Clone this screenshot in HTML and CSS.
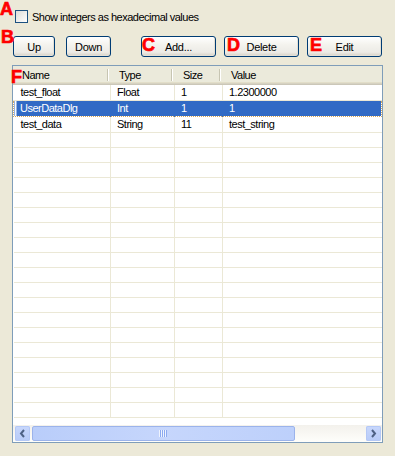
FILE: index.html
```html
<html>
	<head>
		<title>User Data</title>
		<link rel="stylesheet" href="styles.css">
	</head>
	<body>
		<div class="mark" id="markA">A</div>
		<div class="mark" id="markB">B</div>
		<div class="mark" id="markC">C</div>
		<div class="mark" id="markD">D</div>
		<div class="mark" id="markE">E</div>
		<div class="mark" id="markF">F</div>

		<label class="opts">
			<span class="check"></span>
			<span>Show integers as hexadecimal values</span>
		</label>

		<div class="buttons">
			<button class="btn btnUp">Up</button>
			<button class="btn btnDown">Down</button>
			<button class="btn wide btnAdd">Add...</button>
			<button class="btn wide">Delete</button>
			<button class="btn wide">Edit</button>
		</div>

		<div class="list">
			<div class="head">
				<div class="hcell c1">Name</div>
				<div class="hcell c2">Type</div>
				<div class="hcell c3">Size</div>
				<div class="hcell c4">Value</div>
			</div>
			<div class="rows">
				<table>
					<tr><td>test_float</td><td>Float</td><td>1</td><td>1.2300000</td></tr>
					<tr class="sel"><td>UserDataDlg</td><td>Int</td><td>1</td><td>1</td></tr>
					<tr><td>test_data</td><td>String</td><td>11</td><td>test_string</td></tr>
					<tr><td></td><td></td><td></td><td></td></tr>
					<tr><td></td><td></td><td></td><td></td></tr>
					<tr><td></td><td></td><td></td><td></td></tr>
					<tr><td></td><td></td><td></td><td></td></tr>
					<tr><td></td><td></td><td></td><td></td></tr>
					<tr><td></td><td></td><td></td><td></td></tr>
					<tr><td></td><td></td><td></td><td></td></tr>
					<tr><td></td><td></td><td></td><td></td></tr>
					<tr><td></td><td></td><td></td><td></td></tr>
					<tr><td></td><td></td><td></td><td></td></tr>
					<tr><td></td><td></td><td></td><td></td></tr>
					<tr><td></td><td></td><td></td><td></td></tr>
					<tr><td></td><td></td><td></td><td></td></tr>
					<tr><td></td><td></td><td></td><td></td></tr>
					<tr><td></td><td></td><td></td><td></td></tr>
					<tr><td></td><td></td><td></td><td></td></tr>
					<tr><td></td><td></td><td></td><td></td></tr>
					<tr><td></td><td></td><td></td><td></td></tr>
					<tr><td></td><td></td><td></td><td></td></tr>
				</table>
			</div>
			<div class="hscroll">
				<div class="arrow">
					<svg width="15" height="15" viewBox="0 0 15 15"><path d="M9 4 L6 7.5 L9 11" fill="none" stroke="#4d6185" stroke-width="2"/></svg>
				</div>
				<div class="track">
					<div class="thumb">
						<svg width="8" height="7" viewBox="0 0 8 7"><path d="M0.5 0v7M2.5 0v7M4.5 0v7M6.5 0v7" stroke="#eef3fe" stroke-width="1"/><path d="M1.5 0v7M3.5 0v7M5.5 0v7M7.5 0v7" stroke="#8caaf0" stroke-width="1"/></svg>
					</div>
				</div>
				<div class="arrow">
					<svg width="15" height="15" viewBox="0 0 15 15"><path d="M6 4 L9 7.5 L6 11" fill="none" stroke="#4d6185" stroke-width="2"/></svg>
				</div>
			</div>
		</div>
	</body>
</html>
```

FILE: styles.css
```css
body{
	margin: 0;
	background-color: #ece9d8;
	font-family: "Liberation Sans", Arial, sans-serif;
	font-size: 11px;
	letter-spacing: -0.5px;
	color: #000000;
	position: relative;
	width: 395px;
	height: 456px;
	overflow: hidden;
}
.mark{
	position: absolute;
	color: #ff0000;
	font-family: "Liberation Sans", Arial, sans-serif;
	font-weight: bold;
	font-size: 18px;
	line-height: 18px;
	letter-spacing: 0;
	-webkit-text-stroke: 0.7px #ff0000;
	z-index: 5;
}
#markA{ left: 0px; top: 0px; }
#markB{ left: 1px; top: 28px; }
#markC{ left: 142px; top: 36px; }
#markD{ left: 227px; top: 36px; }
#markE{ left: 310px; top: 36px; }
#markF{ left: 11px; top: 68px; }

.opts{
	display: flex;
	align-items: center;
	padding: 10px 0 0 15px;
	height: 13px;
}
.check{
	width: 11px;
	height: 11px;
	border: 1px solid #1c5180;
	background: linear-gradient(135deg, #dcdcd7, #ffffff);
	margin-right: 4px;
}

.buttons{
	display: flex;
	margin: 13px 0 0 13px;
	height: 21px;
}
.btn{
	height: 21px;
	padding: 0;
	font-family: "Liberation Sans", Arial, sans-serif;
	font-size: 11px;
	letter-spacing: -0.3px;
	color: #000000;
	border: 1px solid #003c74;
	border-radius: 3px;
	background: linear-gradient(#ffffff, #f4f3ee 40%, #ecebe6 80%, #d6d0c5);
	box-shadow: inset -1px -1px 0 #e3e0d5;
	margin-right: 8px;
}
.btnUp{ width: 42px; margin-right: 11px; }
.btnDown{ width: 45px; margin-right: 30px; }
.wide{ width: 75px; }

.list{
	margin: 8px 0 0 12px;
	width: 369px;
	height: 376px;
	border: 1px solid #7f9db9;
	background-color: #ffffff;
	display: flex;
	flex-direction: column;
}
.head{
	display: flex;
	height: 16px;
	background-color: #ebeadb;
	border-bottom: 1px solid #e2dec9;
	box-shadow: 0 1px 0 #d6d2c2, 0 2px 0 #cbc7b8;
	margin-bottom: 2px;
	flex-shrink: 0;
}
.hcell{
	position: relative;
	padding-left: 9px;
	line-height: 18px;
	box-sizing: border-box;
}
.hcell::after{
	content: "";
	position: absolute;
	right: 1px;
	top: 3px;
	width: 1px;
	height: 12px;
	background-color: #c7c5b2;
	border-right: 1px solid #ffffff;
}
.hcell.c4::after{
	display: none;
}
.head .c1{ width: 97px; }
.head .c2{ width: 64px; }
.head .c3{ width: 48px; }
.head .c4{ flex: 1; }

.rows{
	flex: 1;
	overflow: hidden;
}
table{
	border-collapse: collapse;
	table-layout: fixed;
	width: 369px;
	font-size: 11px;
}
td{
	height: 15px;
	padding: 0 0 0 6px;
	font-family: "Liberation Sans", Arial, sans-serif;
	font-size: 11px;
	letter-spacing: -0.5px;
	border-right: 1px solid #ebe8d6;
	border-bottom: 1px solid #ebe8d6;
	white-space: nowrap;
	overflow: hidden;
	line-height: 15px;
	box-sizing: border-box;
}
tr td:first-child{ width: 97px; padding-left: 7px; }
tr td:nth-child(2){ width: 64px; }
tr td:nth-child(3){ width: 48px; }
tr td:nth-child(4){ border-right: none; }
tr.sel td{
	background-color: #316ac5;
	color: #ffffff;
	border-top: 1px dotted #d9a95a;
	border-bottom: 1px dotted #d9a95a;
	border-right-color: #316ac5;
}
tr.sel td:first-child{
	background: linear-gradient(to right, #ffffff 2px, #316ac5 2px);
	padding-left: 6px;
	border-left: 1px dotted #d9a95a;
}
tr.sel td:last-child{
	border-right: 1px dotted #d9a95a;
}

.hscroll{
	display: flex;
	height: 17px;
	flex-shrink: 0;
	background: linear-gradient(#f3f1ec, #fefefb);
	padding: 1px 1px 0 2px;
	box-sizing: border-box;
}
.arrow{
	width: 15px;
	height: 15px;
	border-radius: 2px;
	background: linear-gradient(#c8d7fc, #b7cbf8);
	box-shadow: inset 0 0 0 1px #b4c8f6;
}
.arrow svg{
	display: block;
}
.track{
	flex: 1;
	display: flex;
	padding: 0 1px;
}
.thumb{
	width: 263px;
	height: 15px;
	margin-left: 1px;
	border: 1px solid #9bb3eb;
	border-radius: 2px;
	background: linear-gradient(to right, #b9cdfa, #c6d6fc 50%, #bdd0fb);
	display: flex;
	align-items: center;
	justify-content: flex-end;
	padding-right: 127px;
	box-sizing: border-box;
}
.thumb svg{
	display: block;
}
```
